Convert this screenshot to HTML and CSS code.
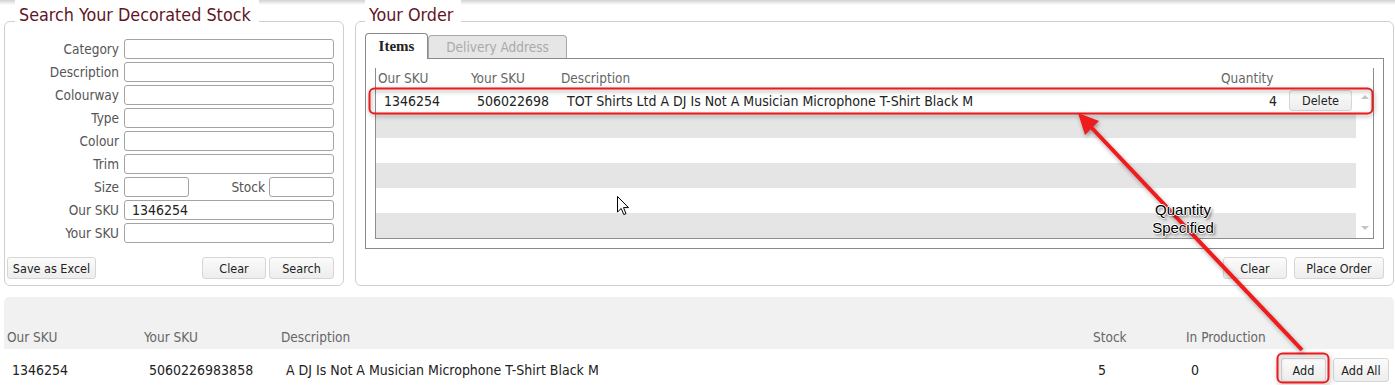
FILE: index.html
```html
<!DOCTYPE html>
<html lang="en">
<head>
    <meta charset="UTF-8">
    <title>Decorated Stock</title>
    <link rel="stylesheet" href="styles.css">
</head>
<body>
    <div class="topbar"></div>
    <div class="main">
        <fieldset class="box search">
            <legend>Search Your Decorated Stock</legend>
            <div class="fields">
                <label>Category</label><input type="text">
                <label>Description</label><input type="text">
                <label>Colourway</label><input type="text">
                <label>Type</label><input type="text">
                <label>Colour</label><input type="text">
                <label>Trim</label><input type="text">
                <label>Size</label>
                <div class="pair">
                    <input type="text" class="short">
                    <label>Stock</label>
                    <input type="text" class="short">
                </div>
                <label>Our SKU</label><input type="text" value="1346254">
                <label>Your SKU</label><input type="text">
            </div>
            <div class="actions">
                <button class="btn-excel">Save as Excel</button>
                <span class="spacer"></span>
                <button class="btn-clear">Clear</button>
                <button class="btn-search">Search</button>
            </div>
        </fieldset>
        <fieldset class="box order">
            <legend>Your Order</legend>
            <div class="tabs">
                <div class="tab active">Items</div>
                <div class="tab">Delivery Address</div>
            </div>
            <div class="panel">
                <div class="grid">
                    <div class="grid-head">
                        <span>Our SKU</span>
                        <span>Your SKU</span>
                        <span>Description</span>
                        <span>Quantity</span>
                    </div>
                    <div class="grid-body">
                        <div class="rows">
                            <div class="row item">
                                <span>1346254</span>
                                <span>506022698</span>
                                <span>TOT Shirts Ltd A DJ Is Not A Musician Microphone T-Shirt Black M</span>
                                <span class="qty">4</span>
                                <span><button class="btn-delete">Delete</button></span>
                            </div>
                            <div class="row alt"></div>
                            <div class="row"></div>
                            <div class="row alt"></div>
                            <div class="row"></div>
                            <div class="row alt"></div>
                        </div>
                        <div class="scroll">
                            <span class="arrow-up"></span>
                            <span class="arrow-down"></span>
                        </div>
                    </div>
                </div>
            </div>
            <div class="actions end">
                <button class="btn-clear">Clear</button>
                <button class="btn-place">Place Order</button>
            </div>
        </fieldset>
    </div>
    <div class="stock">
        <div class="stock-head">
            <span>Our SKU</span>
            <span>Your SKU</span>
            <span>Description</span>
            <span>Stock</span>
            <span>In Production</span>
            <span></span>
        </div>
        <div class="stock-row">
            <span>1346254</span>
            <span>5060226983858</span>
            <span>A DJ Is Not A Musician Microphone T-Shirt Black M</span>
            <span>5</span>
            <span>0</span>
            <span class="row-buttons">
                <button class="btn-add">Add</button>
                <button class="btn-addall">Add All</button>
            </span>
        </div>
    </div>

    <!-- screenshot annotation -->
    <svg class="notes" width="1395" height="385" viewBox="0 0 1395 385">
        <defs>
            <filter id="shade" x="-5%" y="-50%" width="110%" height="200%">
                <feDropShadow dx="1" dy="2" stdDeviation="2" flood-color="#000" flood-opacity="0.35"/>
            </filter>
        </defs>
        <g filter="url(#shade)" fill="none" stroke="#ea1c1c" stroke-width="2">
            <rect x="369.5" y="88.5" width="1003" height="25" rx="5"/>
            <rect x="1277.5" y="353.5" width="51" height="29" rx="5"/>
        </g>
        <g filter="url(#shade)">
            <line x1="1090" y1="126" x2="1302" y2="350" stroke="#ee1a1a" stroke-width="4"/>
            <polygon points="1078,113 1085,135 1099,121" fill="#ee1a1a"/>
        </g>
    </svg>
    <div class="note-text">Quantity<br>Specified</div>
    <svg class="cursor" width="13" height="20" viewBox="0 0 13 20">
        <path d="M0.5 0.5 L0.5 16 L4.2 12.5 L6.8 18.6 L9 17.6 L6.5 11.6 L11.5 11.6 Z" fill="#fff" stroke="#000" stroke-width="1"/>
    </svg>
</body>
</html>
```

FILE: styles.css
```css
body {
    font-family: "DejaVu Sans Condensed", "DejaVu Sans", sans-serif;
    font-size: 13.5px;
    color: #222;
    margin: 0;
    padding: 0;
    background-color: #fff;
}
.topbar {
    height: 5px;
    background: linear-gradient(#d2d2d2, #fff);
}
.main {
    display: flex;
    gap: 11px;
    margin-top: 6px;
    padding: 0 1px 0 4px;
}
.box {
    margin: 0;
    border: 1px solid #cfcfcf;
    border-radius: 6px;
    min-width: 0;
}
.box legend {
    font-size: 17.8px;
    line-height: 8px;
    color: #621426;
    background: #fff;
    box-shadow: 0 -11px 0 #fff;
    padding: 0 8px 12px 4px;
}
.search {
    flex: none;
    width: 340px;
    box-sizing: border-box;
    padding: 8px 9px 6px 2px;
}
.search legend {
    margin-left: 8px;
}
.order {
    flex: 1;
    padding: 2px 9px 6px 9px;
}
.fields {
    display: grid;
    grid-template-columns: 112px 210px;
    column-gap: 5px;
    row-gap: 3px;
}
label {
    color: #555;
    text-align: right;
    line-height: 20px;
}
input {
    height: 20px;
    box-sizing: border-box;
    border: 1px solid #a4a4a4;
    border-radius: 3px;
    padding: 0 7px;
    font-family: inherit;
    font-size: 14px;
    color: #222;
    min-width: 0;
}
.pair {
    display: flex;
}
.pair .short {
    width: 65px;
}
.pair label {
    flex: 1;
    padding-right: 4px;
}
.actions {
    display: flex;
    gap: 3px;
    margin-top: 14px;
}
.actions.end {
    justify-content: flex-end;
    gap: 7px;
    margin-top: 8px;
}
.spacer {
    flex: 1;
}
button {
    height: 22px;
    padding: 0;
    font-family: inherit;
    font-size: 12.5px;
    color: #222;
    background: linear-gradient(#fbfbfb, #ededed);
    border: 1px solid #d6d6d6;
    border-radius: 3px;
}
.btn-excel { width: 89px; }
.btn-clear { width: 64px; }
.btn-search { width: 65px; }
.btn-place { width: 90px; }
.tabs {
    display: flex;
    align-items: flex-end;
    height: 25px;
}
.tab {
    height: 23px;
    box-sizing: border-box;
    width: 139px;
    text-align: center;
    line-height: 22px;
    color: #aaa;
    background: #e6e6e6;
    border: 1px solid #a8a8a8;
    border-bottom: none;
    border-radius: 4px 4px 0 0;
}
.tab.active {
    width: 63px;
    height: 26px;
    margin-bottom: -1px;
    position: relative;
    line-height: 25px;
    font-family: "Liberation Serif", serif;
    font-weight: bold;
    font-size: 15px;
    color: #222;
    background: #fff;
    border-color: #8a8a8a;
}
.panel {
    border: 1px solid #8a8a8a;
    padding: 9px 9px 9px 9px;
}
.grid {
    border: 1px solid #8c8c8c;
    border-top: none;
}
.grid-head,
.row.item {
    display: grid;
    grid-template-columns: 93px 90px 660px 64px 1fr;
    align-items: center;
}
.grid-head {
    height: 20px;
    padding-left: 2px;
    color: #666;
}
.grid-body {
    display: flex;
}
.rows {
    flex: 1;
}
.row {
    height: 25px;
}
.row.alt {
    background: #e5e5e5;
}
.row.item {
    padding-left: 2px;
    font-size: 14px;
}
.row.item span {
    padding-left: 6px;
}
.row.item .qty {
    text-align: right;
    padding-right: 8px;
}
.row.item span:last-child {
    padding-left: 4px;
}
.btn-delete {
    width: 63px;
    height: 21px;
}
.scroll {
    width: 17px;
    display: flex;
    flex-direction: column;
    justify-content: space-between;
    align-items: center;
    padding: 7px 0 8px;
}
.arrow-up,
.arrow-down {
    width: 0;
    height: 0;
    border-left: 4px solid transparent;
    border-right: 4px solid transparent;
}
.arrow-up {
    border-bottom: 4px solid #c4c4c4;
}
.arrow-down {
    border-top: 4px solid #c4c4c4;
}
.stock {
    margin: 11px 1px 0 4px;
}
.stock-head,
.stock-row {
    display: grid;
    grid-template-columns: 137px 137px 812px 93px 1fr auto;
    padding-left: 3px;
}
.stock-head {
    height: 52px;
    box-sizing: border-box;
    align-items: end;
    padding-bottom: 2px;
    line-height: 20px;
    color: #666;
    background: #f1f1f1;
    border-radius: 5px 5px 0 0;
}
.stock-row {
    align-items: center;
    height: 42px;
    font-size: 14px;
}
.stock-row span {
    padding-left: 5px;
}
.stock-row .row-buttons {
    display: flex;
    gap: 7px;
    padding-right: 5px;
}
.btn-add {
    width: 45px;
    height: 24px;
}
.btn-addall {
    width: 56px;
    height: 24px;
}
.notes {
    position: absolute;
    left: 0;
    top: 0;
    pointer-events: none;
}
.note-text {
    position: absolute;
    left: 1140px;
    top: 201px;
    width: 86px;
    text-align: center;
    font-family: "Liberation Sans", Arial, sans-serif;
    font-size: 15px;
    line-height: 18px;
    color: #000;
    text-shadow: -1px 0 #fff, 1px 0 #fff, 0 -1px #fff, 0 1px #fff, 2px 2px 3px rgba(0, 0, 0, 0.6);
}
.cursor {
    position: absolute;
    left: 617px;
    top: 196px;
}
```
